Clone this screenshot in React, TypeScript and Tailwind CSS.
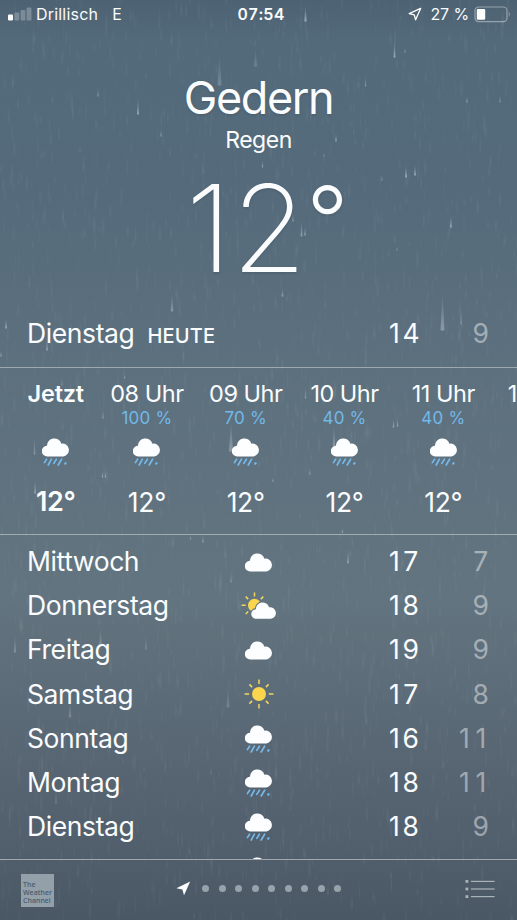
import React from 'react';

type Condition = 'cloud' | 'rain' | 'sun' | 'partly';

interface Hour {
  label: string;
  chance?: string;
  temp: string;
}

interface Day {
  name: string;
  icon: Condition;
  high: number;
  low: number;
}

const hours: Hour[] = [
  { label: '08 Uhr', chance: '100 %', temp: '12°' },
  { label: '09 Uhr', chance: '70 %', temp: '12°' },
  { label: '10 Uhr', chance: '40 %', temp: '12°' },
  { label: '11 Uhr', chance: '40 %', temp: '12°' },
];

const days: Day[] = [
  { name: 'Mittwoch', icon: 'cloud', high: 17, low: 7 },
  { name: 'Donnerstag', icon: 'partly', high: 18, low: 9 },
  { name: 'Freitag', icon: 'cloud', high: 19, low: 9 },
  { name: 'Samstag', icon: 'sun', high: 17, low: 8 },
  { name: 'Sonntag', icon: 'rain', high: 16, low: 11 },
  { name: 'Montag', icon: 'rain', high: 18, low: 11 },
  { name: 'Dienstag', icon: 'rain', high: 18, low: 9 },
];

const CLOUD =
  'M5.4 19.4A5.3 5.3 0 0 1 4.9 8.8A7.4 7.4 0 0 1 19.4 6.7A6.4 6.4 0 1 1 21.5 19.4Z';

// x, bottom y, length, width, opacity
const drops: number[][] = [
  [305.5, 22, 18, 2.4, 0.5],
  [219.5, 86, 32, 4, 0.24],
  [255.5, 67, 20, 3, 0.2],
  [394.5, 58, 18, 2, 0.5],
  [405, 53, 6, 1.5, 0.4],
  [365.5, 87, 12, 1.5, 0.35],
  [138, 115, 18, 2, 0.5],
  [161, 137, 9, 1.5, 0.4],
  [98, 97, 9, 1.5, 0.35],
  [467, 103, 7, 1.5, 0.45],
  [500, 103, 9, 1.5, 0.35],
  [336, 142, 10, 1.8, 0.45],
  [324, 157, 5, 1.5, 0.35],
  [262.5, 168, 9, 1.5, 0.4],
  [406, 178, 14, 2, 0.5],
  [415, 176, 12, 2, 0.5],
  [382, 181, 7, 1.5, 0.3],
  [451, 228, 14, 1.8, 0.5],
  [301.5, 237, 18, 2, 0.4],
  [305, 236, 10, 1.5, 0.5],
  [293, 222, 10, 1.5, 0.4],
  [397, 251, 5, 1.5, 0.35],
  [282.5, 297, 9, 2, 0.4],
  [172, 312, 20, 2.6, 0.35],
  [442.5, 331, 40, 4, 0.36],
  [461, 325, 24, 2, 0.22],
  [6, 329, 12, 2, 0.45],
  [47, 351, 14, 2, 0.4],
  [1, 357, 7, 2, 0.35],
  [62, 386, 10, 1.5, 0.3],
  [124.5, 379, 6, 1.5, 0.4],
  [103, 419, 12, 1.5, 0.35],
  [231, 452, 32, 4, 0.36],
  [34.5, 455, 20, 1.8, 0.3],
  [334, 447, 24, 2.4, 0.34],
  [102.5, 478, 8, 1.4, 0.45],
  [105.5, 478, 8, 1.4, 0.45],
  [393.5, 428, 10, 1.5, 0.5],
  [397.5, 427, 9, 1.5, 0.45],
  [305.5, 399, 14, 1.8, 0.3],
  [35, 494, 16, 2, 0.36],
  [310, 475, 8, 1.5, 0.35],
  [273, 482, 5, 1.5, 0.45],
  [342.5, 533, 5, 1.5, 0.45],
  [203, 543, 10, 1.5, 0.4],
  [190.5, 540, 6, 1.5, 0.35],
  [348, 564, 16, 2.2, 0.36],
  [231, 583, 10, 1.5, 0.3],
  [15, 653, 20, 2.4, 0.28],
  [100.5, 645, 20, 2.4, 0.22],
  [146, 650, 18, 2.2, 0.18],
  [70, 718, 20, 2.6, 0.24],
  [228, 708, 24, 3, 0.2],
  [56, 804, 18, 2.4, 0.16],
  [211, 775, 10, 1.6, 0.16],
];

// Fixed seed so the rain falls in the same place on every render
const makeDrizzle = () => {
  let seed = 4711;
  const next = () => {
    seed = (seed * 16807) % 2147483647;
    return seed / 2147483647;
  };
  return Array.from({ length: 2000 }, () => ({
    x: next() * 517,
    y: next() * 940 - 20,
    length: 8 + next() * 18,
    width: 1 + next() * 1.6,
    opacity: 0.02 + next() * 0.04,
  }));
};

const drizzle = makeDrizzle();

const Rain: React.FC = () => (
  <svg className="absolute inset-0 h-full w-full" viewBox="0 0 517 920" aria-hidden="true">
    <defs>
      <linearGradient id="drop" x1="0" y1="0" x2="0" y2="1">
        <stop offset="0" stopColor="#dce8ee" stopOpacity="0" />
        <stop offset="0.5" stopColor="#dce8ee" stopOpacity="0.5" />
        <stop offset="1" stopColor="#dce8ee" />
      </linearGradient>
      <linearGradient id="drizzle" x1="0" y1="0" x2="0" y2="1">
        <stop offset="0" stopColor="#dce8ee" stopOpacity="0" />
        <stop offset="0.6" stopColor="#dce8ee" />
        <stop offset="1" stopColor="#dce8ee" stopOpacity="0" />
      </linearGradient>
    </defs>
    {drizzle.map((d, i) => (
      <rect key={i} x={d.x} y={d.y} width={d.width} height={d.length} fill="url(#drizzle)" opacity={d.opacity} />
    ))}
    {drops.map(([x, y, length, width, opacity], i) => (
      <path
        key={i}
        d={`M${x} ${y - length}L${x + width / 2} ${y - 1}Q${x} ${y + 0.6} ${x - width / 2} ${y - 1}Z`}
        fill="url(#drop)"
        opacity={opacity}
      />
    ))}
  </svg>
);

const RainIcon: React.FC = () => (
  <svg width="28" height="30" viewBox="0 0 28 30">
    <path d={CLOUD} fill="#fdfeff" />
    <g stroke="#74b9ea" strokeWidth="1.7" strokeLinecap="round">
      <path d="M4.6 22.2L2.4 25.6M9.4 22.2L6.2 28M14.4 22.2L11.8 26.4M19.6 22.2L16.2 28" />
      <path d="M23.2 26.6L23.6 26.2" strokeWidth="2.2" />
    </g>
  </svg>
);

const CloudIcon: React.FC = () => (
  <svg width="28" height="20" viewBox="0 0 28 20">
    <path d={CLOUD} fill="#fdfeff" />
  </svg>
);

const SunIcon: React.FC = () => (
  <svg width="30" height="30" viewBox="0 0 30 30">
    <circle cx="15" cy="15" r="7" fill="#fbd54d" />
    <path
      d="M15 0.6V5M15 25V29.4M0.6 15H5.2M24.8 15H29.4M5.4 5.4L8.1 8.1M21.9 21.9L24.6 24.6M5.4 24.6L8.1 21.9M21.9 8.1L24.6 5.4"
      stroke="#f3d561"
      strokeWidth="1.5"
    />
  </svg>
);

const PartlyIcon: React.FC = () => (
  <svg width="36" height="28" viewBox="0 0 36 28">
    <circle cx="13.5" cy="13.3" r="6.5" fill="#fbd54d" />
    <path
      d="M13.5 0.6V4.4M0.6 13.3H4.6M4.7 4.6L7.2 7.1M4.7 22L7.2 19.5M19.8 7.1L22.3 4.6"
      stroke="#f3d561"
      strokeWidth="1.5"
    />
    <g transform="translate(10.4 9.2) scale(0.91)">
      <path d={CLOUD} fill="#fdfeff" stroke="#63747f" strokeWidth="2.4" paintOrder="stroke" />
    </g>
  </svg>
);

const icons: Record<Condition, React.FC> = {
  cloud: CloudIcon,
  rain: RainIcon,
  sun: SunIcon,
  partly: PartlyIcon,
};

// Equal-width digit cells keep the temperature columns aligned
const Temp: React.FC<{ value: number; className: string }> = ({ value, className }) => (
  <span className={`flex justify-end ${className}`}>
    {String(value)
      .split('')
      .map((digit, i) => (
        <span key={i} className="w-[16.4px] text-center">
          {digit}
        </span>
      ))}
  </span>
);

const StatusBar: React.FC = () => (
  <div className="flex h-[28px] items-center px-2 text-base leading-none">
    <div className="flex flex-1 items-center">
      <svg width="24" height="14" viewBox="0 0 24 14" fill="#fff">
        <rect x="0" y="7.4" width="5" height="6" rx="1.2" />
        <rect x="6.4" y="5.4" width="4.8" height="8" rx="1.2" opacity="0.25" />
        <rect x="12.6" y="3" width="4.8" height="10.4" rx="1.2" opacity="0.25" />
        <rect x="18.6" y="0.4" width="4.8" height="13" rx="1.2" opacity="0.25" />
      </svg>
      <span className="ml-1 tracking-[0.2px]">Drillisch</span>
      <span className="ml-[14px]">E</span>
    </div>
    <span className="ml-[2px] font-semibold tracking-[0.3px] tabular-nums">07:54</span>
    <div className="-mr-[3px] flex flex-1 items-center justify-end">
      <svg width="14" height="14" viewBox="0 0 14 14" fill="none" stroke="#fff" strokeWidth="1.3" strokeLinejoin="round">
        <path d="M12.6 1.4L1.2 6.6L6.2 7.8L7.6 12.8Z" />
      </svg>
      <span className="ml-[8px] tracking-[-0.1px]">27 %</span>
      <svg className="ml-[5px]" width="38" height="17" viewBox="0 0 38 17">
        <rect x="1" y="1" width="32" height="14.6" rx="3.6" fill="none" stroke="#fff" strokeOpacity="0.4" strokeWidth="1.2" />
        <rect x="2.8" y="2.9" width="8.4" height="10.8" rx="1.2" fill="#fff" />
        <path d="M34.8 5.8Q36.8 8.3 34.8 10.8Z" fill="#fff" fillOpacity="0.4" />
      </svg>
    </div>
  </div>
);

const DayRow: React.FC<{ day: Day }> = ({ day }) => {
  const Icon = icons[day.icon];
  return (
    <div className="flex h-[44.15px] items-center">
      <span className="w-[214px] tracking-[-0.4px]">{day.name}</span>
      <div className="flex w-9 items-center justify-center">
        <Icon />
      </div>
      <Temp value={day.high} className="w-[142px]" />
      <Temp value={day.low} className="w-[70px] text-white/45" />
    </div>
  );
};

const HourColumn: React.FC<{ hour: Hour }> = ({ hour }) => (
  <div className="flex w-[98.8px] shrink-0 flex-col items-center">
    <span className="h-[30px] text-[23.5px] leading-[30px] tracking-[-0.5px] whitespace-nowrap">{hour.label}</span>
    <span className="h-[19px] text-[17px] leading-[19px] tracking-[0.2px] text-[#72b8e8]">{hour.chance}</span>
    <div className="mt-[9px] ml-px h-[30px]">
      <RainIcon />
    </div>
    <span className="mt-[19px] text-[26.5px] leading-[32px] tracking-[-0.3px]">{hour.temp}</span>
  </div>
);

const Footer: React.FC = () => (
  <div className="flex h-[61px] items-center border-t border-white/45 pr-[22px] pl-[21px]">
    <div className="flex h-[33px] w-[33px] flex-col justify-end bg-[#93a0aa] pb-[2px] pl-[2px] font-['Open_Sans'] text-[7px] leading-[8px] font-semibold text-[#4d5d6c]">
      <span className="block h-2">The</span>
      <span className="block h-2">Weather</span>
      <span className="block h-2">Channel</span>
    </div>
    <div className="ml-[122px] flex items-center pb-[3px]">
      <svg width="15" height="15" viewBox="0 0 15 15">
        <path d="M14.2 0.6L0.4 7.2L6.4 8.4L8 14.2Z" fill="#fff" />
      </svg>
      <div className="ml-[11px] flex gap-[9.5px]">
        {Array.from({ length: 9 }, (_, i) => (
          <span key={i} className="h-[7px] w-[7px] rounded-full bg-[#98a2ab]" />
        ))}
      </div>
    </div>
    <svg className="mb-[2px] ml-auto" width="30" height="20" viewBox="0 0 30 20" fill="#a9b3ba">
      {[1, 8.6, 16.2].map((y) => (
        <g key={y}>
          <rect x="0.5" y={y} width="2.8" height="2.8" />
          <rect x="6" y={y + 0.8} width="23.6" height="1.2" />
        </g>
      ))}
    </svg>
  </div>
);

const App: React.FC = () => {
  return (
    <div className="relative h-[920px] w-[517px] overflow-hidden bg-[linear-gradient(180deg,#4d6272_0px,#536a7b_40px,#556b7b_200px,#5d707e_370px,#62747f_600px,#5c6b78_700px,#525f6d_840px,#4a5866_920px)] font-['Inter',sans-serif] text-[#fafcfd]">
      <Rain />
      <div className="relative flex h-full flex-col">
        <StatusBar />

        <header className="flex h-[273px] flex-col items-center pt-[44px]">
          <h1 className="text-[45px] leading-[52px] tracking-[-1.4px] [text-shadow:0_1px_3px_rgba(0,0,0,0.15)]">Gedern</h1>
          <p className="mt-[4px] text-[23px] leading-[25px] tracking-[-0.5px]">Regen</p>
          <p className="mt-[15px] ml-[17px] flex text-[121px] leading-[120px] font-extralight [text-shadow:0_1px_3px_rgba(0,0,0,0.15)]">
            12<span className="text-[92px] leading-[104px] font-light">°</span>
          </p>
        </header>

        <div className="flex h-[66px] items-center pl-[27px] text-[26.5px]">
          <span className="tracking-[-0.4px]">Dienstag</span>
          <span className="ml-[13px] pt-1 text-[20px] font-medium tracking-[0.2px]">HEUTE</span>
          <Temp value={14} className="ml-auto" />
          <Temp value={9} className="mr-[28px] w-[70px] text-white/45" />
        </div>

        <div className="flex h-[167px] border-t border-white/40 pt-[11px]">
          <div className="ml-[14px] flex w-[83.5px] shrink-0 flex-col items-center">
            <span className="h-[49px] text-[23.5px] leading-[30px] font-semibold tracking-[-0.2px]">Jetzt</span>
            <div className="mt-[9px] h-[30px]">
              <RainIcon />
            </div>
            <span className="mt-[19px] text-[27px] leading-[32px] font-semibold tracking-[-0.4px]">12°</span>
          </div>
          {hours.map((hour) => (
            <HourColumn key={hour.label} hour={hour} />
          ))}
          <span className="ml-[15px] text-[23.5px] leading-[30px] whitespace-nowrap">12 Uhr</span>
        </div>

        <div className="h-[325px] overflow-hidden border-t border-white/40 pt-[5px] pl-[27px] text-[26.5px]">
          {days.map((day) => (
            <DayRow key={day.name} day={day} />
          ))}
          <div className="ml-[218px] pt-[7px]">
            <RainIcon />
          </div>
        </div>

        <Footer />
      </div>
    </div>
  );
};

export default App;
